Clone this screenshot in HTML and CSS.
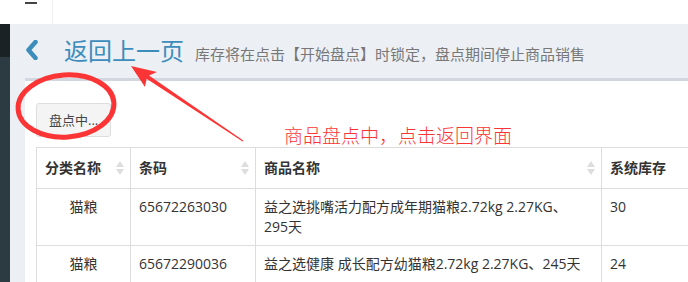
FILE: index.html
```html
<!DOCTYPE html>
<html lang="zh-CN">
<head>
  <meta charset="UTF-8">
  <meta name="viewport" content="width=device-width, initial-scale=1.0">
  <title>盘点中</title>
  <link rel="stylesheet" href="styles.css">
</head>
<body>
  <!-- Top bar -->
  <header class="topbar">
    <div class="logo"><span class="bar"></span></div>
  </header>

  <div class="wrapper">
    <aside class="sidebar">
      <div class="sidebar-top"></div>
    </aside>

    <main class="content">
      <!-- Page header -->
      <section class="content-header">
        <a href="#" class="back">
          <svg width="12" height="20" viewBox="0 0 12 20"><path d="M9.5 2 L2.5 10 L9.5 18" fill="none" stroke="#3c8dbc" stroke-width="4.5" stroke-linecap="round" stroke-linejoin="round"/></svg>
          <span class="back-title">返回上一页</span>
        </a>
        <small class="subtitle">库存将在点击【开始盘点】时锁定，盘点期间停止商品销售</small>
      </section>

      <!-- Stock box -->
      <section class="box">
        <button class="btn">盘点中...</button>
        <table class="table">
          <colgroup>
            <col style="width:94px">
            <col style="width:125px">
            <col style="width:346px">
            <col style="width:140px">
          </colgroup>
          <thead>
            <tr>
              <th><div class="th-in">分类名称<i class="sort"></i></div></th>
              <th><div class="th-in">条码<i class="sort"></i></div></th>
              <th><div class="th-in">商品名称<i class="sort"></i></div></th>
              <th><div class="th-in">系统库存<i class="sort"></i></div></th>
            </tr>
          </thead>
          <tbody>
            <tr>
              <td class="center">猫粮</td>
              <td>65672263030</td>
              <td>益之选挑嘴活力配方成年期猫粮2.72kg 2.27KG、<span class="nowrap">295天</span></td>
              <td>30</td>
            </tr>
            <tr>
              <td class="center">猫粮</td>
              <td>65672290036</td>
              <td>益之选健康 成长配方幼猫粮2.72kg 2.27KG、<span class="nowrap">245天</span></td>
              <td>24</td>
            </tr>
          </tbody>
        </table>
      </section>
    </main>
  </div>

  <!-- Red annotation drawn over the screenshot -->
  <svg class="markup" width="688" height="282" viewBox="0 0 688 282">
    <ellipse cx="66" cy="106" rx="48" ry="31" transform="rotate(-4 66 106)" fill="none" stroke="#fb3535" stroke-width="5"/>
    <polygon points="131,66 157,72 149,75.6 243.3,140.6 242.7,141.4 146.6,78.8 145,87" fill="#fb3535"/>
  </svg>
  <div class="note">商品盘点中，点击返回界面</div>
</body>
</html>
```

FILE: styles.css
```css
/* Global */
* {
  margin: 0;
  padding: 0;
  box-sizing: border-box;
}

html, body {
  width: 688px;
  height: 282px;
  overflow: hidden;
}

body {
  font-family: "Open Sans", "Noto Sans CJK SC", sans-serif;
  font-size: 14px;
  line-height: 20px;
  color: #333;
  background: #ecf0f5;
  position: relative;
}

a {
  text-decoration: none;
}

/* Top bar */
.topbar {
  height: 24px;
  background: #fff;
  display: flex;
}

.topbar .logo {
  width: 53px;
  border-right: 1px solid #eee;
  position: relative;
}

.topbar .bar {
  display: block;
  width: 12px;
  height: 2px;
  margin: 2px 0 0 25px;
  background: #444;
}

/* Layout */
.wrapper {
  display: flex;
  height: 258px;
}

.sidebar {
  width: 10px;
  background: #2c3b41;
}

.sidebar-top {
  height: 33px;
  background: #1a2226;
}

.content {
  flex: 1;
  overflow: hidden;
  padding-left: 15px;
}

/* Header */
.content-header {
  display: flex;
  align-items: baseline;
  padding-top: 13px;
  height: 54px;
}

.back {
  display: flex;
  align-items: baseline;
  color: #3c8dbc;
}

.back svg {
  margin-left: 1px;
  align-self: center;
  position: relative;
  top: -1px;
}

.back-title {
  font-size: 24px;
  line-height: 28px;
  margin-left: 26px;
  color: #3c8dbc;
}

.subtitle {
  font-size: 15px;
  color: #777;
  margin-left: 11px;
}

/* Box */
.box {
  background: #fff;
  border-top: 3px solid #d2d6de;
  padding: 22px 0 0 11px;
  height: 300px;
}

.btn {
  display: block;
  font-family: inherit;
  font-size: 13px;
  line-height: 20px;
  padding: 6px 12px;
  color: #444;
  background: #f4f4f4;
  border: 1px solid #ddd;
  border-radius: 3px;
}

/* Table */
.table {
  margin-top: 10px;
  border-collapse: collapse;
  table-layout: fixed;
  width: 705px;
  border: 1px solid #ddd;
}

.table th,
.table td {
  border: 1px solid #ddd;
  text-align: left;
  vertical-align: top;
}

.table th {
  padding: 10px 6px 10px 8px;
  font-weight: bold;
}

.table td {
  padding: 8px;
}

.table td.center {
  text-align: center;
}

.nowrap {
  white-space: nowrap;
}

.th-in {
  display: flex;
  justify-content: space-between;
  align-items: center;
}

.sort {
  display: flex;
  flex-direction: column;
  gap: 2px;
}

.sort::before,
.sort::after {
  content: "";
  width: 0;
  height: 0;
  border-left: 4px solid transparent;
  border-right: 4px solid transparent;
}

.sort::before {
  border-bottom: 6px solid #ddd;
}

.sort::after {
  border-top: 6px solid #ddd;
}

/* Annotation */
.markup {
  position: absolute;
  left: 0;
  top: 0;
  pointer-events: none;
}

.note {
  position: absolute;
  left: 284px;
  top: 126px;
  font-size: 19px;
  line-height: 20px;
  color: #fb3535;
  font-weight: 300;
}
```
